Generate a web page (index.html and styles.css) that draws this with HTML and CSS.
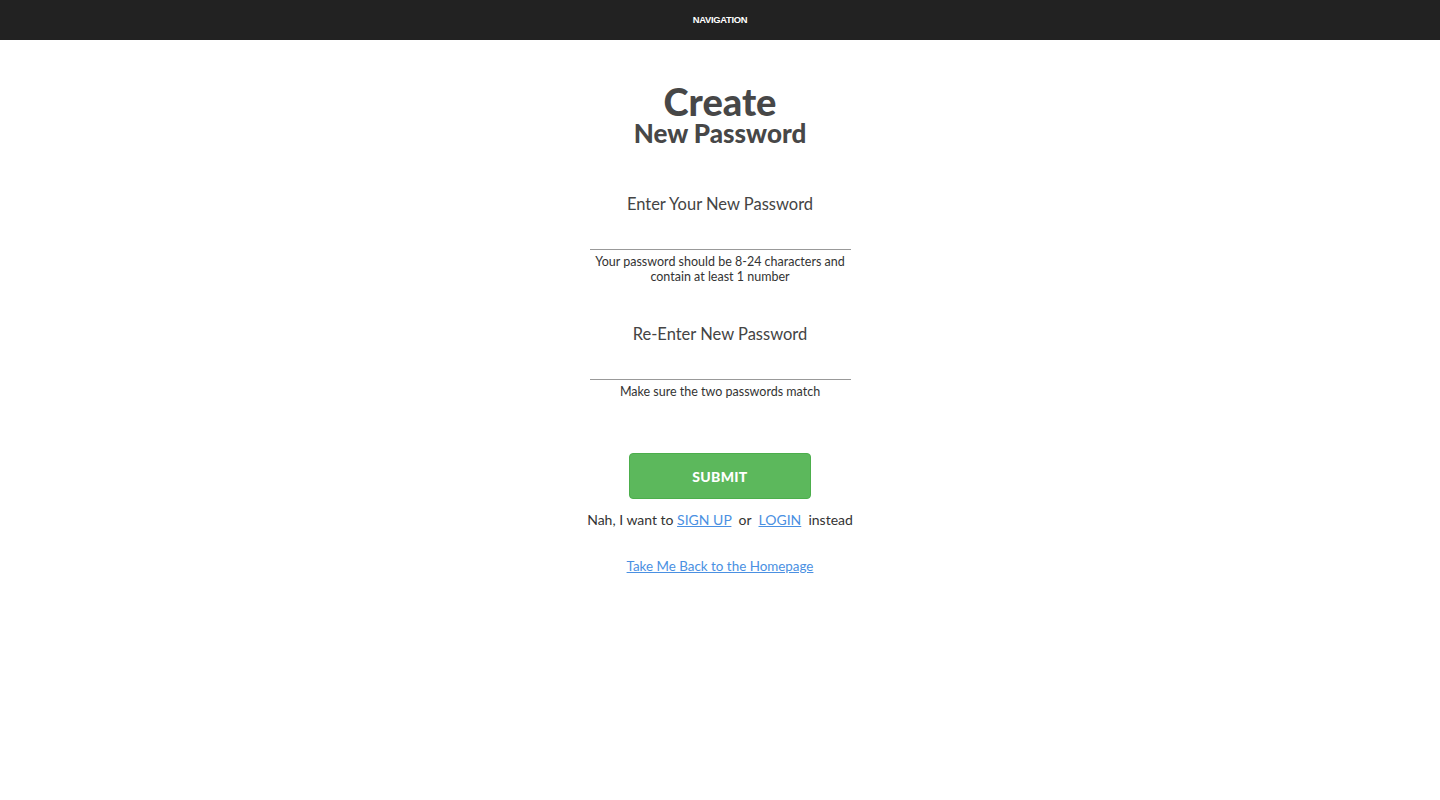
FILE: index.html
```html
<!DOCTYPE html>
<html>
<head>
<meta charset="utf-8">
<link rel="stylesheet" href="styles.css">
</head>
<body>
<header class="nav">NAVIGATION</header>
<main class="page">
  <h1 class="title"><span class="title-big">Create</span><span class="title-small">New Password</span></h1>
  <form class="form">
    <div class="field">
      <label class="label">Enter Your New Password</label>
      <input class="input" type="password">
      <p class="help">Your password should be 8-24 characters and contain at least 1 number</p>
    </div>
    <div class="field field-second">
      <label class="label">Re-Enter New Password</label>
      <input class="input" type="password">
      <p class="help">Make sure the two passwords match</p>
    </div>
    <button class="submit" type="button">SUBMIT</button>
  </form>
  <p class="alt">Nah, I want to <a href="#" class="link">SIGN UP</a>&nbsp; or &nbsp;<a href="#" class="link">LOGIN</a>&nbsp; instead</p>
  <a href="#" class="link home">Take Me Back to the Homepage</a>
</main>
</body>
</html>
```
FILE: styles.css
```css
html, body {
  margin: 0;
  padding: 0;
  background: #fff;
  font-family: Lato, "Open Sans", sans-serif;
  color: #444;
}
.nav {
  height: 40px;
  box-sizing: border-box;
  padding-bottom: 2px;
  background: #222;
  color: #fff;
  font-family: "Liberation Sans", Arial, sans-serif;
  font-weight: bold;
  font-size: 9.4px;
  letter-spacing: -0.3px;
  display: flex;
  align-items: center;
  justify-content: center;
}
.page {
  display: flex;
  flex-direction: column;
  align-items: center;
}
.title {
  margin: 42px 0 0;
  display: flex;
  flex-direction: column;
  align-items: center;
  color: #474747;
  font-weight: 900;
}
.title-big {
  font-size: 38px;
  line-height: 38px;
}
.title-small {
  font-size: 26px;
  line-height: 26px;
}
.form {
  display: flex;
  flex-direction: column;
  align-items: center;
  margin-top: 48px;
}
.field {
  width: 261px;
  display: flex;
  flex-direction: column;
  align-items: center;
}
.field-second {
  margin-top: 40px;
}
.label {
  font-size: 16.5px;
  line-height: 20px;
  color: #444;
}
.input {
  width: 100%;
  box-sizing: border-box;
  height: 28px;
  margin-top: 8px;
  padding: 0;
  border: none;
  border-bottom: 1px solid #999;
  outline: none;
  background: transparent;
}
.help {
  margin: 4px 0 0;
  font-size: 12.5px;
  line-height: 15px;
  text-align: center;
  color: #333;
}
.submit {
  margin-top: 54px;
  width: 182px;
  height: 46px;
  background: #5cb85c;
  border: 1px solid #4cae4c;
  border-radius: 4px;
  color: #fff;
  font-family: Lato, sans-serif;
  font-weight: 900;
  font-size: 14px;
  letter-spacing: 0.3px;
}
.alt {
  margin: 11px 0 0;
  font-size: 14px;
  line-height: 20px;
  color: #333;
}
.link {
  color: #4a90e2;
  text-decoration: underline;
}
.home {
  margin-top: 28px;
  font-size: 13.4px;
  line-height: 16px;
}
```
